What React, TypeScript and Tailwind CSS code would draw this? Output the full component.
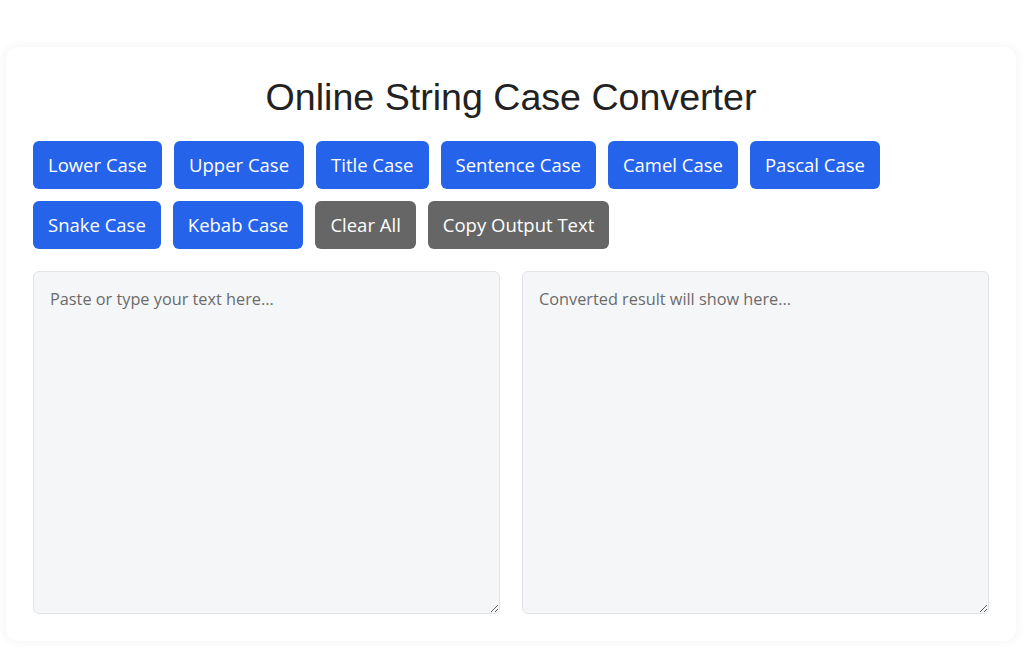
const buttons = [
  { label: "Lower Case", gray: false },
  { label: "Upper Case", gray: false },
  { label: "Title Case", gray: false },
  { label: "Sentence Case", gray: false },
  { label: "Camel Case", gray: false },
  { label: "Pascal Case", gray: false },
  { label: "Snake Case", gray: false },
  { label: "Kebab Case", gray: false },
  { label: "Clear All", gray: true },
  { label: "Copy Output Text", gray: true },
];

export default function App() {
  return (
    <div className="min-h-screen bg-white pt-[47px] pl-[6px]">
      <div className="w-[1010px] h-[594px] rounded-xl bg-white px-[27px] shadow-[0_0_12px_rgba(0,0,0,0.06)]">
        <h1
          className="pt-[28px] text-center text-[37.6px] leading-[44px] text-[#222]"
          style={{ fontFamily: '"Liberation Sans", Arial, sans-serif' }}
        >
          Online String Case Converter
        </h1>

        <div
          className="mt-[22px] flex w-[880px] flex-wrap gap-x-[12px] gap-y-[12px]"
          style={{ fontFamily: '"Open Sans", "Noto Sans", sans-serif' }}
        >
          {buttons.map((b) => (
            <button
              key={b.label}
              className={
                "h-[48px] rounded-md px-[15px] text-[18.5px] text-white " +
                (b.gray ? "bg-[#666666]" : "bg-[#2563eb]")
              }
            >
              {b.label}
            </button>
          ))}
        </div>

        {/* input / output */}
        <div
          className="mt-[22px] grid grid-cols-2 gap-[22px]"
          style={{ fontFamily: '"Open Sans", "Noto Sans", sans-serif' }}
        >
          <textarea
            className="h-[343px] rounded-md border border-[#e2e4e8] bg-[#f5f6f8] px-[16px] py-[15px] text-[16.3px] text-[#333] placeholder:text-[#6b6b6b] outline-none"
            placeholder="Paste or type your text here..."
          />
          <textarea
            className="h-[343px] rounded-md border border-[#e2e4e8] bg-[#f5f6f8] px-[16px] py-[15px] text-[16.3px] text-[#333] placeholder:text-[#6b6b6b] outline-none"
            placeholder="Converted result will show here..."
            readOnly
          />
        </div>
      </div>
    </div>
  );
}
